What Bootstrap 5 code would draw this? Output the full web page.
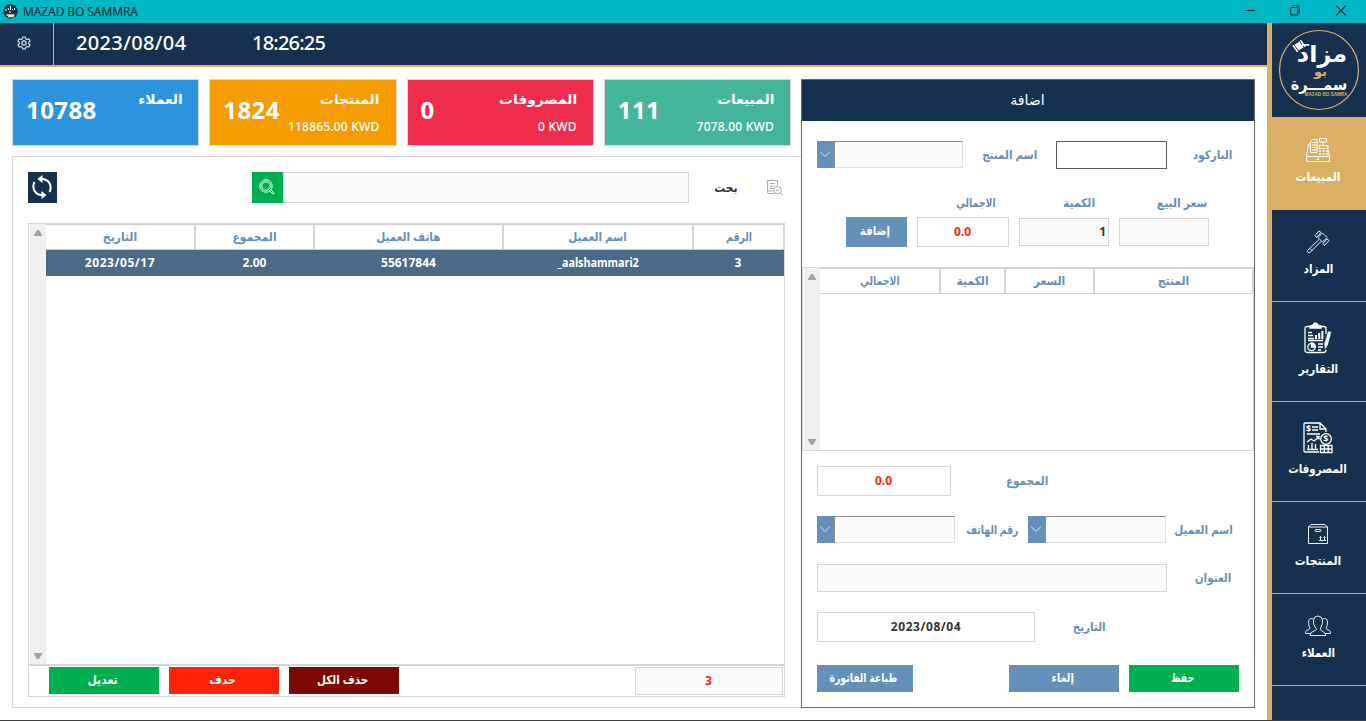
<!DOCTYPE html>
<html lang="ar">
<head>
<meta charset="utf-8">
<title>MAZAD BO SAMMRA</title>
<link rel="stylesheet" href="https://cdn.jsdelivr.net/npm/bootstrap@5.3.0/dist/css/bootstrap.min.css">
<script src="https://cdn.jsdelivr.net/npm/bootstrap@5.3.0/dist/js/bootstrap.bundle.min.js"></script>
<style>
:root{--navy:#15314f;--gold:#dbb066;--steel:#6490ba;--line:#d6d6d6}
body{width:1366px;height:721px;overflow:hidden;font-family:"Noto Sans","DejaVu Sans Condensed","DejaVu Sans",sans-serif;font-size:12px;line-height:1;background:#fff;white-space:nowrap}
.win-bar{height:23px;background:#00b7c6;color:#10242c;padding-left:3px}
.win-title{margin-left:5px;font-size:12px;letter-spacing:-.1px}
.win-ctl{gap:35px;padding:0 20px 2px 0}
.app-body{height:697px}
.app-foot{height:1px;background:#3f3f3f}
.main-col{width:1267px}
.top-strip{height:44px;background:var(--navy);border-bottom:2px solid var(--gold);color:#fff;font-size:20px;font-weight:500}
.gear-box{width:54px;border-right:1px solid var(--gold);padding:0 5px 2px 0}
.date-txt{margin-left:22px;width:176px;letter-spacing:.35px;padding-bottom:2px}
.time-txt{letter-spacing:-.8px;padding-bottom:2px}
.work{padding:12px 0 0 12px}
.left-col{width:789px}
.tiles{gap:10px;height:67px;width:779px}
.tile{border:1px solid var(--line);color:#fff;padding:0 16px 0 13px;flex:1 1 0}
.tile-num{font-size:24px;font-weight:700;margin-top:18px;letter-spacing:.4px}
.tile-side{padding-top:13px;text-align:right}
.tile-name{font-size:13px;font-weight:700;height:14px;transform:scaleX(1.18);transform-origin:right}
.tile-sum{font-size:12px;font-weight:500;margin-top:14px;letter-spacing:.2px}
.bg-cust{background:#2c94df}.bg-prod{background:#f59c00}.bg-exp{background:#ee2c4b}.bg-sale{background:#44b59b}
.list-panel{margin-top:10px;height:552px;border:1px solid var(--line);border-right:0;padding:15px 16px 0 15px}
.find-row{height:31px}
.sync-btn{width:29px;height:31px;background:var(--navy);padding:0 2px 2px 0}
.find-btn{width:31px;height:31px;background:#00b050;margin-left:195px;padding:0 2px 2px 0}
.find-in{width:406px;height:31px}
.fld{background:#fafafa;border:1px solid var(--line);border-radius:0;padding:0}
.find-lbl{width:28px;margin-left:23px;font-weight:700;color:#333;font-size:12px}
.gridbox{border:1px solid var(--line)}
.sales-grid{margin-top:20px;height:442px;width:757px}
.scroller{width:17px;flex:none;background:#f0f0f0;border-left:1px solid #fff;padding:6px 1px 5px 0}
.g-head{height:26px;border-top:1px solid #d0d0d0;border-bottom:1px solid #cfcfcf;color:var(--steel);font-weight:700}
.g-head>div,.g-row>div{display:flex;align-items:center;justify-content:center;flex:none}
.g-head>div{border-right:2px solid var(--line)}
.g-head>div:last-child{border-right:1px solid var(--line)}
.g-row{height:26px;background:#4a6a88;color:#fff;font-weight:700;font-size:12px}
.g-row>div{padding-right:2px}
.day{letter-spacing:.55px}
.c1{width:150px}.c2{width:119px}.c3{width:189px}.c4{width:190px}.c5{width:90px}
.p1{width:121px}.p2{width:65px}.p3{width:89px}.p4{width:158px}
.list-foot{height:32px;width:757px;border:1px solid var(--line);border-top-width:1px;padding:1px 1px 1px 20px}
.cmd{border:0;border-radius:0;padding:0 3px 2px 0;color:#fff;font-weight:700;font-size:12px;line-height:1;height:27px;width:110px}
.cmd:hover{color:#fff}
.cmd-green{background:#00b050}.cmd-red{background:#ff2209}.cmd-dark{background:#7a0a02}.cmd-steel{background:var(--steel)}
.red-val{color:#ff1e0a;font-weight:700;padding-right:1px}
.form-panel{width:454px;height:629px;border:1px solid #666;color:var(--steel);font-weight:700}
.form-head{height:41px;background:var(--navy);color:#fff;font-size:14px;font-weight:400;padding:0 2px 2px 0}
.form-head span{transform:scaleX(1.12)}
.frow{padding-left:15px}
.lbl{flex:none;display:flex;justify-content:center;align-items:center}
.slim{display:inline-block;transform:scaleX(.86)}
.slim-1{display:inline-block;transform:scaleX(.96)}
.combo{height:27px;background:#fafafa;border-top:1px solid #8c8c8c;border-right:1px solid #dedede;border-bottom:1px solid #dedede}
.combo-btn{width:18px;height:27px;margin-top:-1px;padding:0 1px 2px 0;background:var(--steel);border-right:1px solid #8c8c8c}
.side{width:99px;background:var(--navy);border-left:5px solid var(--gold)}
.side-item{border-bottom:1px solid var(--gold);color:#fff;font-weight:700;font-size:12px;padding-right:2px}
.side-item.on{background:var(--gold)}
.brand{height:94px}
svg{display:block;flex:none}
</style>
</head>
<body>
<header class="win-bar d-flex align-items-center">
  <svg width="15" height="15" viewBox="0 0 15 15"><circle cx="7.5" cy="7.5" r="7.2" fill="#15314f"/><path d="M3 5v2M5 4l1 2M7.500 2v4M9.500 5v1M11.500 4v2M6 8h2" stroke="#fff"/><path d="M3.500 11h8M5 12.500h6" stroke="#f3dfb2" stroke-width="1.300"/></svg>
  <span class="win-title">MAZAD BO SAMMRA</span>
  <div class="win-ctl d-flex align-items-center ms-auto">
    <svg width="11" height="11" viewBox="0 0 11 11"><path d="M1 5.500h10" stroke="#10242c"/></svg>
    <svg width="11" height="11" viewBox="0 0 11 11" fill="none" stroke="#10242c"><rect x=".5" y="2.500" width="7.500" height="7.500" rx="1"/><path d="M2 .7h5.500q2 0 2 2v5.500"/></svg>
    <svg width="10" height="11" viewBox="0 0 10 11"><path d="M0 .5l10 10M10 .5l-10 10" stroke="#10242c" stroke-width="1.200"/></svg>
  </div>
</header>
<div class="app-body d-flex">
  <main class="main-col">
    <div class="top-strip d-flex align-items-stretch">
      <div class="gear-box d-flex align-items-center justify-content-center">
        <svg width="14" height="14" viewBox="0 0 14 14" fill="none" stroke="#e4e9ee" stroke-width="1.100"><path d="M5.700 1h2.600l.4 1.800 1.300.7 1.800-.6 1.300 2.200-1.400 1.300v1.300l1.400 1.200-1.300 2.200-1.800-.6-1.300.8-.4 1.700H5.700l-.4-1.700-1.300-.8-1.800.6L.9 8.900l1.400-1.200V6.400L.9 5.100l1.300-2.200 1.800.6 1.300-.7z"/><circle cx="7" cy="7" r="2.100"/></svg>
      </div>
      <div class="date-txt d-flex align-items-center">2023/08/04</div>
      <div class="time-txt d-flex align-items-center">18:26:25</div>
    </div>
    <div class="work d-flex">
      <div class="left-col">
        <div class="tiles d-flex">
          <div class="tile bg-cust d-flex justify-content-between"><div class="tile-num">10788</div><div class="tile-side"><div class="tile-name">العملاء</div></div></div>
          <div class="tile bg-prod d-flex justify-content-between"><div class="tile-num">1824</div><div class="tile-side"><div class="tile-name">المنتجات</div><div class="tile-sum">118865.00 KWD</div></div></div>
          <div class="tile bg-exp d-flex justify-content-between"><div class="tile-num">0</div><div class="tile-side"><div class="tile-name">المصروفات</div><div class="tile-sum">0 KWD</div></div></div>
          <div class="tile bg-sale d-flex justify-content-between"><div class="tile-num">111</div><div class="tile-side"><div class="tile-name">المبيعات</div><div class="tile-sum">7078.00 KWD</div></div></div>
        </div>
        <section class="list-panel">
          <div class="find-row d-flex align-items-center">
            <div class="sync-btn d-flex align-items-center justify-content-center">
              <svg width="20" height="24" viewBox="0 0 20 24" fill="none" stroke="#fff" stroke-width="2"><path d="M9 4c8-.5 11.500 7 8.500 13M11 20C3 20.500-.5 13 2.500 7"/><path d="M10.500 0v8L5.500 4zM9.500 16v8l5-4z" fill="#fff" stroke="none"/></svg>
            </div>
            <div class="find-btn d-flex align-items-center justify-content-center">
              <svg width="16" height="16" viewBox="0 0 16 16" fill="none" stroke="#fff"><circle cx="7" cy="7" r="6.200"/><circle cx="7" cy="7" r="4.200"/><path d="M10.500 11.500l1-1 3.800 3.700-1.100 1.100z"/></svg>
            </div>
            <input class="fld find-in" aria-label="بحت">
            <div class="find-lbl lbl">بحت</div>
            <svg class="ms-auto" style="margin-right:2px" width="16" height="16" viewBox="0 0 16 16" fill="none" stroke="#a8a8a8"><path d="M7 13.500H2Q.5 13.500.5 12V.5h10V5M.5 11H6M3 3.500h5M3 6h4M3 8.500h3"/><circle cx="10.500" cy="10" r="3.800"/><path d="M9 10l1.200 1.200 2-2.300M13.300 12.800l2.200 2.700"/></svg>
          </div>
          <div class="gridbox sales-grid d-flex">
            <div class="scroller d-flex flex-column justify-content-between align-items-center">
              <svg width="8" height="6"><path d="M0 6V5l3-5h2l3 5v1z" fill="#a3a3a3"/></svg>
              <svg width="8" height="6"><path d="M0 0v1l3 5h2l3-5V0z" fill="#a3a3a3"/></svg>
            </div>
            <div>
              <div class="g-head d-flex"><div class="c1">التاريخ</div><div class="c2">المجموع</div><div class="c3"><span class="slim-1">هاتف العميل</span></div><div class="c4"><span class="slim-1">اسم العميل</span></div><div class="c5"><span class="slim">الرقم</span></div></div>
              <div class="g-row d-flex"><div class="c1 day">2023/05/17</div><div class="c2">2.00</div><div class="c3">55617844</div><div class="c4"><span class="slim-1" style="transform:scaleX(.9)">_aalshammari2</span></div><div class="c5">3</div></div>
            </div>
          </div>
          <div class="list-foot d-flex">
            <button class="btn cmd cmd-green">تعديل</button>
            <button class="btn cmd cmd-red" style="margin-left:10px">حذف</button>
            <button class="btn cmd cmd-dark" style="margin-left:10px"><span class="slim-1">حذف الكل</span></button>
            <div class="fld red-val lbl ms-auto" style="width:148px">3</div>
          </div>
        </section>
      </div>
      <section class="form-panel">
        <div class="form-head d-flex align-items-center justify-content-center"><span>اضافة</span></div>
        <div class="frow d-flex" style="margin-top:20px;height:28px">
          <div class="combo d-flex" style="width:146px"><div class="combo-btn lbl"><svg width="10" height="6"><path d="M0 .5l5 5 5-5" fill="none" stroke="#dce6ef"/></svg></div></div>
          <div class="lbl" style="width:56px;margin-left:19px"><span class="slim-1">اسم المنتج</span></div>
          <input class="fld" style="width:111px;margin-left:18px;border-color:#5c5c5c;background:#fff" aria-label="الباركود">
          <div class="lbl" style="width:38px;margin-left:26px"><span class="slim-1">الباركود</span></div>
        </div>
        <div class="d-flex" style="margin-top:26px;padding-left:155px;height:16px">
          <div class="lbl" style="width:38px"><span class="slim">الاجمالي</span></div>
          <div class="lbl" style="width:32px;margin-left:68px">الكمية</div>
          <div class="lbl" style="width:50px;margin-left:62px">سعر البيع</div>
        </div>
        <div class="d-flex align-items-center" style="margin-top:6px;padding-left:44px;height:30px">
          <button class="btn cmd cmd-steel" style="width:61px;height:30px"><span class="slim-1">إضافة</span></button>
          <div class="fld red-val lbl bg-white" style="width:92px;height:30px;margin-left:10px">0.0</div>
          <div class="fld lbl justify-content-end" style="width:90px;height:28px;margin-left:10px;padding-right:2px;color:#333">1</div>
          <div class="fld" style="width:90px;height:28px;margin-left:10px"></div>
        </div>
        <div class="gridbox d-flex" style="margin-top:20px;height:184px">
          <div class="scroller d-flex flex-column justify-content-between align-items-center">
            <svg width="8" height="6"><path d="M0 6V5l3-5h2l3 5v1z" fill="#a3a3a3"/></svg>
            <svg width="8" height="6"><path d="M0 0v1l3 5h2l3-5V0z" fill="#a3a3a3"/></svg>
          </div>
          <div><div class="g-head d-flex"><div class="p1"><span class="slim">الاجمالي</span></div><div class="p2">الكمية</div><div class="p3">السعر</div><div class="p4">المنتج</div></div></div>
        </div>
        <div class="frow d-flex" style="margin-top:15px;height:30px">
          <div class="fld red-val lbl bg-white" style="width:134px">0.0</div>
          <div class="lbl" style="width:42px;margin-left:55px"><span class="slim-1">المجموع</span></div>
        </div>
        <div class="frow d-flex" style="margin-top:20px;height:28px">
          <div class="combo d-flex" style="width:138px"><div class="combo-btn lbl"><svg width="10" height="6"><path d="M0 .5l5 5 5-5" fill="none" stroke="#dce6ef"/></svg></div></div>
          <div class="lbl" style="width:52px;margin-left:11px"><span class="slim">رقم الهاتف</span></div>
          <div class="combo d-flex" style="width:138px;margin-left:10px"><div class="combo-btn lbl"><svg width="10" height="6"><path d="M0 .5l5 5 5-5" fill="none" stroke="#dce6ef"/></svg></div></div>
          <div class="lbl" style="width:59px;margin-left:8px"><span class="slim-1">اسم العميل</span></div>
        </div>
        <div class="frow d-flex" style="margin-top:20px;height:28px">
          <input class="fld" style="width:350px" aria-label="العنوان">
          <div class="lbl" style="width:35px;margin-left:28px"><span class="slim-1">العنوان</span></div>
        </div>
        <div class="frow d-flex" style="margin-top:20px;height:30px">
          <div class="fld lbl bg-white day" style="width:218px;color:#333">2023/08/04</div>
          <div class="lbl" style="width:33px;margin-left:38px"><span class="slim-1">التاريخ</span></div>
        </div>
        <div class="frow d-flex" style="margin-top:23px">
          <button class="btn cmd cmd-steel" style="width:96px"><span class="slim">طباعة الفاتورة</span></button>
          <button class="btn cmd cmd-steel" style="margin-left:96px"><span class="slim-1">إلغاء</span></button>
          <button class="btn cmd cmd-green" style="margin-left:10px"><span class="slim">حفظ</span></button>
        </div>
      </section>
    </div>
  </main>
  <nav class="side">
    <div class="brand">
      <svg width="94" height="94" viewBox="0 0 94 94" font-family="DejaVu Sans, sans-serif" font-weight="700" text-anchor="middle">
        <circle cx="47" cy="47" r="39.500" fill="none" stroke="#dbb066" stroke-width="1.200"/>
        <text transform="translate(50 39) scale(1.200 1.150)" font-size="20" fill="#fff">مزاد</text>
        <g transform="translate(27 23) rotate(-35)"><path d="M-3-3.500h6v7h-6z" fill="#fff"/><path d="M-4.500-4v8M4.500-4v8" stroke="#fff" stroke-width="1.500"/><path d="M3 1l6 4" stroke="#fff" stroke-width="1.800"/></g>
        <text x="48.500" y="53" font-size="13" fill="#dbb066">بو</text>
        <text transform="translate(47 66.500) scale(.88 1)" font-size="16.500" fill="#fff">سمـــرة</text>
        <text x="54" y="73" font-size="4.600" fill="#dbb066" font-family="Liberation Sans">MAZAD BO SAMRA</text>
      </svg>
    </div>
    <div class="side-item on d-flex flex-column align-items-center" style="height:93px;padding-top:20px">
      <svg width="26" height="26" viewBox="0 0 26 26" fill="none" stroke="#fff"><path d="M1.500 19L3.500 7h2M22 9l2.500 10M1.500 19.500h23v5h-23zM5.500 15.500V4.500l2-2H12v13zM7 5.500h4M7 8h4M7 10.500h4M7 13h4M14.500 1.500h7V5h-7zM18 5v4M14 8.500h9v3h-9z"/><path d="M14 14h2m1.500 0h2m1.500 0h2M14 17h2m1.500 0h2m1.500 0h2" stroke-width="1.600"/><path d="M12 22h2" stroke-width="1.500"/></svg>
      <div class="lbl" style="height:14px;margin-top:7px">المبيعات</div>
    </div>
    <div class="side-item d-flex flex-column align-items-center" style="height:92px;padding-top:20px">
      <svg width="24" height="24" viewBox="0 0 24 24" fill="none" stroke="#eef2f5"><path d="M12 7.500l4.500-4.500 4.500 4.500-4.500 4.500zM9 5.500l4-4.500 2 1.500-4.500 5zM17 13.500l4-4.500 2 1.500-4.500 5zM13 9.500L1.500 20.500q-.5 1 .3 1.800t2 .3L15 11.500M4 18.500l2 2"/></svg>
      <div class="lbl" style="height:14px;margin-top:8px"><span class="slim-1">المزاد</span></div>
    </div>
    <div class="side-item d-flex flex-column align-items-center" style="height:100px;padding-top:20px">
      <svg width="28" height="32" viewBox="0 0 28 32" fill="none" stroke="#fff" stroke-width="1.300"><path d="M22 12V6.500q0-2-2.500-2H3.500q-2.500 0-2.500 2v21.500q0 2.500 2.500 2.500h16q2.500 0 2.500-2.500"/><path d="M6 6V4l3-1q2-4 5 0l3 1v2z" fill="#fff"/><path d="M4 10.500h4M4 13.500h5M4 16.500h6"/><path d="M12 17V13M15.200 17V11M18.400 17V9" stroke-width="2"/><path d="M4 18.500h15M14 22h5M14 25h5M14 28h3"/><circle cx="7.500" cy="25" r="3.700"/><path d="M7.500 25v-4a4 4 0 0 1 4 4z" fill="#fff"/><path d="M20 22l4-13 3.500 1-3.500 13-3 5z" fill="#fff" stroke="#15314f" stroke-width=".5"/></svg>
      <div class="lbl" style="height:14px;margin-top:8px"><span class="slim-1">التقارير</span></div>
    </div>
    <div class="side-item d-flex flex-column align-items-center" style="height:100px;padding-top:20px">
      <svg width="30" height="32" viewBox="0 0 30 32" fill="none" stroke="#fff" stroke-width="1.300"><path d="M16 30H2q-1 0-1-1V2q0-1 1-1h15l6 6v3M17 1v6h6M9 5h6M9 8h6M4 12h13"/><text x="3" y="10" font-size="9" font-weight="700" fill="#fff" stroke="none">$</text><path d="M4 27.500h11M5.500 27v-4M9 27v-6M12.500 27v-5M4 20l4-3 3 2 5-4M13 14.500h3v3"/><circle cx="23" cy="17" r="5.300"/><text x="20.200" y="20.300" font-size="9" font-weight="700" fill="#fff" stroke="none">$</text><path d="M17.500 23.500H29v7H17.500zM17.500 27H29M21.300 23.500v7M25.200 23.500v7"/></svg>
      <div class="lbl" style="height:14px;margin-top:8px"><span class="slim-1">المصروفات</span></div>
    </div>
    <div class="side-item d-flex flex-column align-items-center" style="height:92px;padding-top:21px">
      <svg width="22" height="22" viewBox="0 0 22 22" fill="none" stroke="#eef2f5"><path d="M1.500 4L4 1.500h14L20.500 4v16.500h-19zM1.500 4h19"/><rect x="8" y="6.500" width="6" height="2" rx="1"/><path d="M13.500 17v-3.500m-1 1.200l1-1 1 1M17.500 17v-3.500m-1 1.200l1-1 1 1M12 17.500h7"/></svg>
      <div class="lbl" style="height:14px;margin-top:9px">المنتجات</div>
    </div>
    <div class="side-item d-flex flex-column align-items-center" style="height:92px;padding-top:21px">
      <svg width="26" height="22" viewBox="0 0 26 22" fill="none" stroke="#e4e9ee"><path d="M5 20.500q0-3.500 4-4.500t1-4Q8 9 8.500 5T13 1t4.500 4T16 12q-2 3 1 4t4 4.500zM8.500 4Q4 2 3.500 7q0 4 1.500 6 0 1.500-3.500 2.500-1 1-1 3H6M17.500 4Q22 2 22.500 7q0 4-1.500 6 0 1.500 3.500 2.500 1 1 1 3H20"/></svg>
      <div class="lbl" style="height:14px;margin-top:9px"><span class="slim-1">العملاء</span></div>
    </div>
  </nav>
</div>
<footer class="app-foot"></footer>
</body>
</html>
